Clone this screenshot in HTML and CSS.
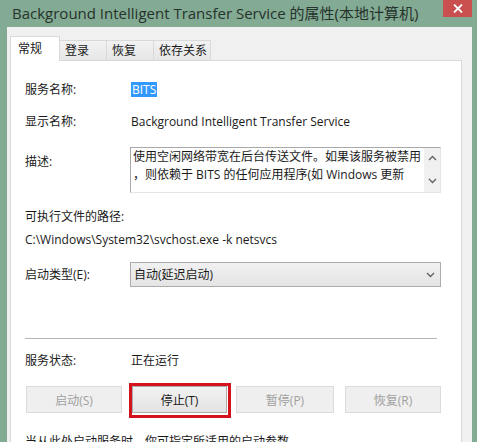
FILE: index.html
```html
<!DOCTYPE html>
<html lang="zh-CN">
<head>
    <meta charset="UTF-8">
    <title>BITS 的属性</title>
    <link rel="stylesheet" href="styles.css">
</head>
<body>
    <div class="window">
        <!-- 标题栏 -->
        <div class="titlebar">
            <span class="title">Background Intelligent Transfer Service 的属性(本地计算机)</span>
            <span class="close-btn">
                <svg width="10" height="9" viewBox="0 0 10 9"><path d="M1 0.5 L9 8.5 M9 0.5 L1 8.5" stroke="#fff" stroke-width="1.8"/></svg>
            </span>
        </div>
        <div class="client">
            <!-- 选项卡 -->
            <ul class="tabs">
                <li class="tab active">常规</li>
                <li class="tab">登录</li>
                <li class="tab">恢复</li>
                <li class="tab">依存关系</li>
            </ul>
            <div class="panel">
                <div class="row row-name">
                    <span class="label">服务名称:</span>
                    <span class="value"><span class="selected">BITS</span></span>
                </div>
                <div class="row row-display">
                    <span class="label">显示名称:</span>
                    <span class="value">Background Intelligent Transfer Service</span>
                </div>
                <div class="row row-desc">
                    <span class="label">描述:</span>
                    <div class="textbox">
                        <div class="textbox-text">使用空闲网络带宽在后台传送文件。如果该服务被禁用<br>，则依赖于 BITS 的任何应用程序(如 Windows 更新</div>
                        <div class="scrollbar">
                            <svg width="9" height="6" viewBox="0 0 9 6"><path d="M1 5 L4.5 1.5 L8 5" fill="none" stroke="#606060" stroke-width="1.3"/></svg>
                            <svg width="9" height="6" viewBox="0 0 9 6"><path d="M1 1 L4.5 4.5 L8 1" fill="none" stroke="#606060" stroke-width="1.3"/></svg>
                        </div>
                    </div>
                </div>
                <div class="path-label">可执行文件的路径:</div>
                <div class="path-value">C:\Windows\System32\svchost.exe -k netsvcs</div>
                <div class="row row-start">
                    <span class="label">启动类型(E):</span>
                    <div class="select">
                        <span>自动(延迟启动)</span>
                        <svg width="9" height="6" viewBox="0 0 9 6"><path d="M1 1 L4.5 4.5 L8 1" fill="none" stroke="#606060" stroke-width="1.3"/></svg>
                    </div>
                </div>
                <div class="separator"></div>
                <div class="row row-status">
                    <span class="label">服务状态:</span>
                    <span class="value">正在运行</span>
                </div>
                <div class="buttons">
                    <button class="btn btn-start" disabled>启动(S)</button>
                    <div class="mark">
                        <button class="btn btn-stop">停止(T)</button>
                    </div>
                    <button class="btn btn-pause" disabled>暂停(P)</button>
                    <button class="btn btn-resume" disabled>恢复(R)</button>
                </div>
                <div class="hint">当从此处启动服务时，你可指定所适用的启动参数。</div>
            </div>
        </div>
    </div>
</body>
</html>
```

FILE: styles.css
```css
*{
    margin: 0;
    padding: 0;
    box-sizing: border-box;
}
html,body{
    height: 442px;
    overflow: hidden;
}
body{
    background-color: #83aa93;
    font-family: "Open Sans", "Noto Sans CJK SC", sans-serif;
    font-size: 12px;
    color: #1a1a1a;
}
.titlebar{
    height: 27px;
    display: flex;
    justify-content: space-between;
    align-items: flex-start;
    padding: 0 5px 0 12px;
}
.title{
    font-size: 15px;
    line-height: 26px;
    color: #26332c;
}
.close-btn{
    width: 29px;
    height: 17px;
    background-color: #c9504f;
    display: flex;
    align-items: center;
    justify-content: center;
}
.client{
    margin: 0 5px 0 7px;
    background-color: #f0f0f0;
    padding: 9px 10px 0 3px;
    height: 415px;
}
.tabs{
    list-style: none;
    display: flex;
    align-items: flex-end;
    height: 24px;
    position: relative;
    z-index: 1;
}
.tab{
    height: 20px;
    line-height: 19px;
    min-width: 47px;
    padding: 0 3px 0 5px;
    border: 1px solid #d9d9d9;
    border-bottom: none;
    border-left: none;
    background: linear-gradient(#f2f2f2, #e6e6e6);
}
.tab.active{
    height: 25px;
    min-width: 50px;
    padding-left: 7px;
    line-height: 23px;
    margin-bottom: -1px;
    background: #fff;
    border-left: 1px solid #d9d9d9;
}
.panel{
    background-color: #fff;
    border: 1px solid #d9d9d9;
    height: 400px;
    padding: 19px 20px 0 14px;
}
.row{
    display: grid;
    grid-template-columns: 105px 311px;
    align-items: center;
    line-height: 20px;
}
.value{
    padding-left: 1px;
}
.selected{
    background-color: #3399ff;
    color: #fff;
    display: inline-block;
    line-height: 15px;
    padding: 0 1px;
}
.row-display{
    margin-top: 12px;
}
.row-desc{
    margin-top: 15px;
    align-items: start;
}
.row-desc .label{
    padding-top: 5px;
}
.textbox{
    height: 46px;
    display: flex;
    border: 1px solid #e6e6e6;
    border-top-color: #a9a9a9;
    border-left-color: #a9a9a9;
}
.textbox-text{
    flex: 1;
    line-height: 18px;
    padding-left: 2px;
    white-space: nowrap;
    overflow: hidden;
}
.scrollbar{
    width: 16px;
    background-color: #f0f0f0;
    display: flex;
    flex-direction: column;
    justify-content: space-between;
    align-items: center;
    padding: 7px 0 8px;
}
.path-label{
    margin-top: 14px;
    line-height: 20px;
}
.path-value{
    margin-top: 3px;
    line-height: 20px;
}
.row-start{
    margin-top: 12px;
}
.select{
    height: 25px;
    border: 1px solid #acacac;
    background: linear-gradient(#f0f0f0, #e5e5e5);
    display: flex;
    justify-content: space-between;
    align-items: center;
    padding: 0 5px 0 3px;
}
.separator{
    margin-top: 51px;
    margin-right: 4px;
    border-top: 1px solid #b4b4b4;
}
.row-status{
    margin-top: 12px;
}
.buttons{
    margin-top: 15px;
    display: flex;
    align-items: flex-start;
    padding-left: 1px;
}
.btn{
    height: 27px;
    font-family: inherit;
    font-size: 12px;
    border: 1px solid #acacac;
    background: linear-gradient(#f2f2f2, #e3e3e3);
    color: #1a1a1a;
}
.btn:disabled{
    background: #efefef;
    border-color: #dcdcdc;
    color: #a0a0a0;
}
.btn-start{
    width: 96px;
}
.mark{
    margin: -3px 0 0 7px;
    border: 3px solid #d4121c;
    padding: 0 1px 2px 0;
}
.btn-stop{
    width: 95px;
    display: block;
}
.btn-pause{
    width: 98px;
    margin-left: 5px;
}
.btn-resume{
    width: 96px;
    margin-left: 11px;
}
.hint{
    margin-top: 14px;
    line-height: 20px;
}
```
